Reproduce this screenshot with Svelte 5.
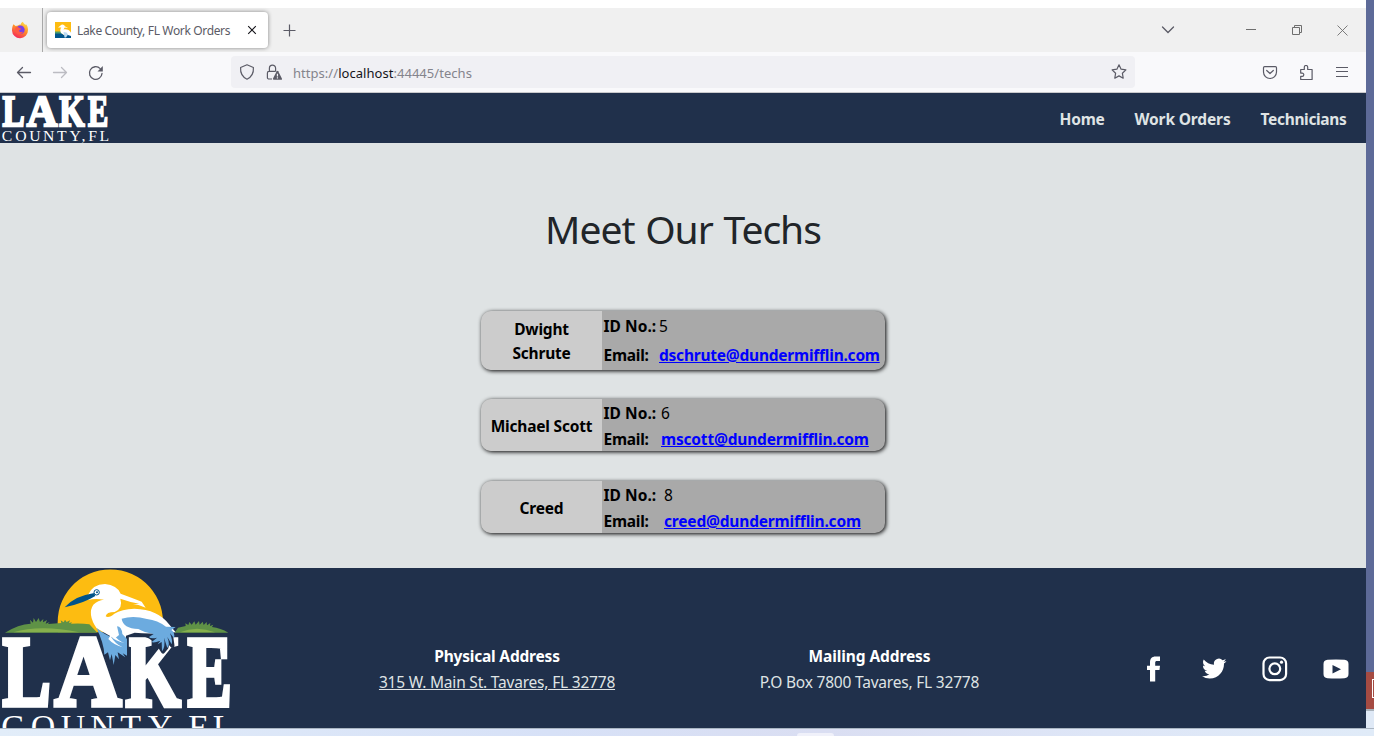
<script>
  const links = [
    { text: 'Home', ls: -0.25 },
    { text: 'Work Orders', ls: -0.14 },
    { text: 'Technicians', ls: -0.34 }
  ];
  const techs = [
    { name: 'Dwight Schrute', id: 5, email: 'dschrute@dundermifflin.com', h: 59, label: 57, row: 29, ls: -0.23 },
    { name: 'Michael Scott', id: 6, email: 'mscott@dundermifflin.com', h: 52, label: 59, row: 26, ls: -0.18 },
    { name: 'Creed', id: 8, email: 'creed@dundermifflin.com', h: 52, label: 62, row: 26, ls: -0.18 }
  ];
  const letters = [
    { ch: 'L', x: 8, k: 0.72 },
    { ch: 'A', x: 165, k: 0.92 },
    { ch: 'K', x: 377, k: 0.71 },
    { ch: 'E', x: 563, k: 0.66 }
  ];
</script>

{#snippet lettering()}
  <g fill="#fff">
    {#each letters as l}
      <text transform="translate({l.x} 434) scale({l.k} 1)" font-family="Liberation Serif, serif" font-weight="700" font-size="298" stroke="#fff" stroke-width="16">{l.ch}</text>
    {/each}
    <text x="4 92 182 271 361 443 520 565 638" y="534" font-family="Liberation Serif, serif" font-size="102">COUNTY,FL</text>
  </g>
{/snippet}

<div class="desktop">
  <div class="browser">
    <div class="titlebar">
      <div class="pinned">
        <svg width="18" height="18" viewBox="0 0 18 18">
          <defs>
            <linearGradient id="fox" x1=".8" y1="0" x2=".3" y2="1"><stop offset="0" stop-color="#ffe14a" /><stop offset=".45" stop-color="#ff9328" /><stop offset="1" stop-color="#f5245c" /></linearGradient>
          </defs>
          <path d="M2.5 3.2 4.6 5 7 4.6C8 3.5 9 3.4 10 3.6 9.7 2.5 10.5 1.3 12 .7c.2 1.5 1.5 2.2 2.5 3.5l.3-1.1C16.4 4.8 17 7 17 9A8 8 0 0 1 1 9.4c0-2.500.5-4.500 1.500-6.200Z" fill="url(#fox)" />
          <circle cx="9.400" cy="8.800" r="4.300" fill="#7a3fe8" />
          <path d="M4.500 6.500c1.600-.8 3-.3 4.200.7l1.600.5c-.4 1-1.700 1.200-2.400 1.800.4 2 2.800 1.900 4.100 1-.8 3-5 3.600-6.800 1C4 10 4 8 4.500 6.500Z" fill="#ff5a48" />
        </svg>
      </div>
      <div class="tab">
        <svg width="16" height="16" viewBox="0 0 16 16">
          <rect width="16" height="16" fill="#fdbc11" />
          <path d="M0 11 5 10l4 3 7-3v6H0Z" fill="#00558c" />
          <path d="M0 9.500h6l2 2H0Z" fill="#4e9b69" />
          <path d="M3 5.500 5.500 3.500c1.300-1.800 4-1 4.300.8L13 6 9.700 5.500 8.500 7.500c3-.8 6 .5 7.500 3V14l-3-1-2-1-2 1-3-2C5 9 5 7.300 6.300 5.500Z" fill="#fff" />
          <path d="m8.500 10 3 .5 1.500 2-2 3H9.500Z" fill="#bddcf2" />
        </svg>
        <span>Lake County, FL Work Orders</span>
        <svg class="x" width="10" height="10" viewBox="0 0 10 10"><path d="m1.200 1.200 7.600 7.600m0-7.600L1.200 8.800" stroke="#15141a" stroke-width="1.100" /></svg>
      </div>
      <svg class="plus" width="13" height="13" viewBox="0 0 13 13"><path d="M6.500.5v12M.5 6.500h12" stroke="#5b5b66" stroke-width="1.200" /></svg>
      <div class="window">
        <svg width="14" height="14" viewBox="0 0 14 14"><path d="m1.500 4 5.500 5.500L12.500 4" fill="none" stroke="#5b5b66" stroke-width="1.300" stroke-linecap="round" /></svg>
        <svg class="min" width="10" height="10" viewBox="0 0 10 10"><path d="M0 4.500h10" stroke="#6e6e6e" /></svg>
        <svg width="10" height="10" viewBox="0 0 10 10"><path d="M.5 2.500h7v7h-7zM2.500 2.500v-2h7v7h-2" fill="none" stroke="#6e6e6e" /></svg>
        <svg width="11" height="11" viewBox="0 0 11 11"><path d="m.5.5 10 10m0-10-10 10" stroke="#6e6e6e" stroke-width=".9" /></svg>
      </div>
    </div>

    <div class="toolbar">
      <div class="history">
        <svg width="16" height="16" viewBox="0 0 16 16"><path d="M14.500 7.500H1.500M6.500 2.500l-5 5 5 5" fill="none" stroke="#5b5b66" stroke-width="1.300" stroke-linecap="round" stroke-linejoin="round" /></svg>
        <svg width="16" height="16" viewBox="0 0 16 16"><path d="M1.500 7.500h13M9.500 2.500l5 5-5 5" fill="none" stroke="#bcbcc2" stroke-width="1.300" stroke-linecap="round" stroke-linejoin="round" /></svg>
        <svg width="16" height="16" viewBox="0 0 16 16"><path d="M14 8.500A6.300 6.300 0 1 1 12.200 3.600" fill="none" stroke="#5b5b66" stroke-width="1.300" stroke-linecap="round" /><path d="M14.800 1v5.400H9.500Z" fill="#5b5b66" /></svg>
      </div>
      <div class="url">
        <svg width="16" height="16" viewBox="0 0 16 16"><path d="m8 .8 6.400 2.700c.3 4.300-1.400 9.300-6.400 11.700C3 12.800 1.300 7.800 1.600 3.500Z" fill="none" stroke="#5b5b66" stroke-width="1.200" stroke-linejoin="round" /></svg>
        <svg class="lock" width="16" height="16" viewBox="0 0 16 16">
          <path d="M6 15H3.200C2 15 1.400 14.400 1.400 13.400V9c0-1 .6-1.600 1.600-1.600h6.500M3.400 7V4.200a3.100 3.100 0 0 1 6.200 0V7.500" fill="none" stroke="#5b5b66" stroke-width="1.200" />
          <path d="M10.700 7.300c.5-.8 1-.8 1.500 0l3.700 7.200c.3.700 0 1.300-.8 1.300H7.800c-.8 0-1.100-.6-.8-1.300Z" fill="#5b5b66" /><path d="M11.450 9.800v2.600m0 .9v1.200" stroke="#f0f0f4" stroke-width="1.200" />
        </svg>
        <span>https://<b>localhost</b>:44445/techs</span>
        <svg class="star" width="16" height="16" viewBox="0 0 16 16"><path d="m8 .8 2.100 4.400 4.800.7-3.500 3.400.8 4.900L8 11.900l-4.200 2.300.8-4.900L1.100 5.900l4.800-.7Z" fill="none" stroke="#5b5b66" stroke-width="1.200" stroke-linejoin="round" /></svg>
      </div>
      <div class="tools">
        <svg width="16" height="16" viewBox="0 0 16 16"><path d="M2.600 1.700h10.800c.7 0 1.100.4 1.100 1.100V7a6.500 6.500 0 0 1-13 0V2.800c0-.7.4-1.100 1.100-1.100ZM4.700 5.500 8 8.500l3.300-3" fill="none" stroke="#5b5b66" stroke-width="1.200" stroke-linecap="round" stroke-linejoin="round" /></svg>
        <svg width="16" height="16" viewBox="0 0 16 16"><path d="M2.700 4.500h3.600V2.200a1.700 1.700 0 0 1 3.400 0V4.500h4.400v10H2.700v-3.200h1.500a1.600 1.600 0 0 0 0-3.200H2.700Z" fill="none" stroke="#5b5b66" stroke-width="1.200" stroke-linejoin="round" /></svg>
        <svg width="16" height="16" viewBox="0 0 16 16"><path d="M2 2.500h12M2 6.500h12M2 11.500h12" stroke="#5b5b66" stroke-width="1.100" /></svg>
      </div>
    </div>

    <header>
      <svg width="110" height="50" viewBox="0 279 330 150"><g transform="translate(3.500 179.500) scale(.463 .455)">{@render lettering()}</g></svg>
      <nav>{#each links as l}<a href="#top" style="letter-spacing:{l.ls}px">{l.text}</a>{/each}</nav>
    </header>

    <main>
      <h1>Meet Our Techs</h1>
      <div class="cards">
        {#each techs as t}
          <article style="height:{t.h}px">
            <div class="name">{t.name}</div>
            <dl style="grid-template-columns:{t.label - 1.5}px auto;line-height:{t.row}px">
              <dt>ID No.:</dt><dd>{t.id}</dd>
              <dt class="em">Email:</dt><dd><a href="mailto:{t.email}" style="letter-spacing:{t.ls}px">{t.email}</a></dd>
            </dl>
          </article>
        {/each}
      </div>
    </main>

    <footer>
      <svg width="250" height="160" viewBox="0 24 750 480">
        <path d="M174 204A158 158 0 1 1 488 204V217H174Z" fill="#fdbc11" />
        <path d="M15 218Q55 193 92 191l-2-12 9 9 2-14 7 12 8-12 4 12 10-9-1 10 12-7-4 11 12-5-5 6 40-3-2-8 9 6 4-8 5 7 10-5-3 8 9-2-3 4Q245 189 268 193L292 218Z" fill="#5f9246" />
        <path d="M40 217Q120 193 238 217Z" fill="#86b04d" />
        <path d="M524 218 534 203 557 198l-1-8 9 5 3-9 7 8 8-10 4 10 10-11 2 11 9-9 3 10 9-9 1 10 10-7-1 9 10-4-4 7Q662 204 685 218Z" fill="#5f9246" />
        <path d="M540 217Q590 196 645 217Z" fill="#86b04d" />
        {@render lettering()}
        <g transform="translate(165 24)">
          <g fill="#20304b" stroke="#20304b" stroke-width="13" stroke-linejoin="round">
            <path d="M180 200h35v58l-12-4-25 20-23-15Z" />
            <path d="M215 198h132l5 35-13-15-5 20-10 12Q300 206 270 200Z" />
          </g>
          <path d="M99 81Q112 49 150 48 186 51 197 77 235 91 260 101L272 119Q245 108 233 109L253 107Q220 101 196 92 205 120 179 132 154 132 152 145 162 151 178 137 200 123 238 122 310 124 344 171L362 193Q285 199 239 194L213 203 211 230 125 181Q96 138 115 110 129 97 147 95 120 90 100 96Z" fill="#fff" />
          <path d="M29 118Q60 83 118 75L121 84Q88 105 29 118Z" fill="#00538a" />
          <circle cx="125" cy="73" r="8" fill="#fff" stroke="#00538a" stroke-width="3" /><circle cx="126" cy="73" r="3" fill="#00538a" />
          <path d="M124 179Q149 201 180 211L192 201 186 175Q200 175 202 198L216 213V263L203 256 211 268 188 253 192 274 181 261 176 291 170 258 165 277 159 253 148 260Q147 226 124 179Z" fill="#6cabdf" />
          <path d="M171 194q18 25 38 31-26-4-42-20 14 24 36 33-28-8-43-25" fill="#fff" />
          <path d="M200 152Q235 142 276 153 308 157 333 176L362 177 349 186Q361 194 357 211L345 195Q354 220 350 229L337 207Q346 231 337 240L327 209Q332 235 321 250L320 222 308 229 316 218Q296 226 290 222L306 209Q287 213 282 207L296 198Q267 193 250 183 204 181 200 152Z" fill="#6cabdf" />
        </g>
      </svg>
      <div class="addr"><b>Physical Address</b><a href="#map">315 W. Main St. Tavares, FL 32778</a></div>
      <div class="addr"><b class="mail">Mailing Address</b><span>P.O Box 7800 Tavares, FL 32778</span></div>
      <div class="social">
        <svg width="26" height="26" viewBox="0 0 26 26"><path d="M10 25.500V14H7V9.700H10V6.500C10 2.500 12 .5 15.500.5H20V5H17C15.600 5 15.200 5.500 15.200 6.700v3H20L19.500 14H15.200V25.500Z" fill="#fff" /></svg>
        <svg width="26" height="26" viewBox="-1 -.3 25.500 25.500"><path d="M23.950 4.570a10 10 0 0 1-2.820.77 4.960 4.960 0 0 0 2.160-2.720c-.95.560-2 .970-3.130 1.190a4.920 4.920 0 0 0-8.380 4.480C7.690 8.100 4.070 6.130 1.640 3.160a4.920 4.920 0 0 0 1.520 6.570 4.900 4.900 0 0 1-2.230-.62v.06a4.920 4.920 0 0 0 3.950 4.830 5 5 0 0 1-2.210.08 4.940 4.940 0 0 0 4.600 3.420A9.870 9.870 0 0 1 0 19.540a14 14 0 0 0 7.550 2.210c9.050 0 14-7.500 14-13.980 0-.21 0-.42-.02-.63a9.940 9.940 0 0 0 2.420-2.570Z" fill="#fff" /></svg>
        <svg width="26" height="26" viewBox="0 0 26 26"><rect x="1.500" y="1.500" width="22.600" height="22.600" rx="6" fill="none" stroke="#fff" stroke-width="2.200" /><circle cx="12.800" cy="12.800" r="5.400" fill="none" stroke="#fff" stroke-width="2.200" /><circle cx="19.500" cy="6.200" r="1.600" fill="#fff" /></svg>
        <svg width="26" height="26" viewBox="0 0 26 26"><path d="M4.500 3.800Q13 3 21.500 3.800 25.500 4.200 25.500 8v10q0 3.800-4 4.200-8.500.8-17 0-4-.4-4-4.200V8Q.5 4.200 4.500 3.800ZM9.500 9v8.500l8.500-4.200Z" fill="#fff" /></svg>
      </div>
    </footer>
  </div>
  <aside><div class="red"><i></i></div></aside>
  <div class="taskbar"><i></i></div>
</div>

<style>
  :global(body) { margin: 0; overflow: hidden; }
  svg { display: block; flex: none; }
  .desktop { width: 1374px; height: 736px; display: grid; grid-template: 728px 8px / 1366px 8px; background: #dfe9f6; font: 15.5px "Noto Sans", sans-serif; letter-spacing: -.2px; overflow: hidden; }
  .browser { display: grid; grid-template-rows: 44px 41px 50px 425px 160px; padding-top: 8px; background: #fff; }
  .titlebar { display: flex; align-items: center; background: #f0f0f0; }
  .pinned { width: 42px; height: 44px; border-right: 1px solid #a9a9a9; display: grid; place-items: center; padding-right: 0; }
  .pinned svg { margin-right: 3px; }
  .tab { margin-left: 4px; width: 221px; height: 36px; box-sizing: border-box; padding: 0 11px 0 8px; background: #fff; border-radius: 4px; box-shadow: 0 0 4px rgba(0, 0, 0, .45); display: flex; align-items: center; gap: 6px; font-size: 12px; letter-spacing: -.35px; color: #5b5b66; white-space: nowrap; }
  .x { margin-left: auto; }
  .plus { margin-left: 15px; margin-top: 1px; }
  .window { margin-left: auto; display: flex; align-items: center; padding-right: 18px; }
  .window .min { margin-left: 71px; margin-right: 36px; }
  .window svg:last-child { margin-left: 35px; }
  .toolbar { display: flex; align-items: center; background: #f9f9fb; border-bottom: 1px solid #c9c9cc; }
  .history { display: flex; gap: 20px; padding-left: 16px; width: 215px; margin-top: 1px; }
  .url { width: 904px; height: 32px; box-sizing: border-box; padding: 0 8px; background: #f0f0f4; border-radius: 4px; display: flex; align-items: center; font-size: 13px; letter-spacing: .04px; color: #84848c; }
  .url span { padding-top: 1px; }
  .lock { margin: 0 11px; }
  .url b { font-weight: 400; color: #15141a; }
  .star { margin-left: auto; }
  .tools { display: flex; gap: 20px; margin: 1px 16px 0 auto; }
  header { background: #20304b; display: flex; justify-content: space-between; }
  nav { display: flex; gap: 30px; padding: 1px 19.500px 0 0; align-items: center; }
  nav a { color: #dfe3e4; text-decoration: none; font-weight: 700; }
  main { background: #dfe3e4; display: flex; flex-direction: column; align-items: center; }
  h1 { margin: 56px 0 0; font-size: 39px; line-height: 60px; font-weight: 400; letter-spacing: -1px; word-spacing: 1.500px; color: #212529; }
  .cards { margin-top: 51.500px; display: grid; gap: 29.600px; width: 404px; color: #000; }
  article { display: grid; grid-template-columns: 121px 1fr; border-radius: 10px; overflow: hidden; background: #a9a9a9; box-shadow: 1px 1px 4px #000; }
  .name { background: #ccc; font-weight: 700; line-height: 24px; text-align: center; padding: 1px 8px 0; display: grid; place-items: center; }
  dl { margin: 0; padding: 1px 0 0 1.500px; display: grid; align-content: center; white-space: nowrap; }
  dt { font-weight: 700; letter-spacing: .05px; }
  .em { letter-spacing: -.25px; }
  dd { margin: 0; }
  dd a { color: #00f; font-weight: 700; }
  footer { background: #20304b; display: grid; grid-template-columns: 311px 372px 373px 1fr; overflow: hidden; }
  .addr { display: flex; flex-direction: column; align-items: center; padding-top: 75px; line-height: 26px; color: #dfe3e4; }
  .addr a { color: inherit; }
  .addr b { color: #fff; }
  .mail { letter-spacing: -.1px; }
  .social { display: flex; gap: 34.700px; padding: 88px 17.500px 0 0; justify-content: flex-end; }
  aside { background: linear-gradient(#5d6a98 709px, #dfe9f6 709px); padding-top: 672px; }
  .red { height: 39px; background: #a54b42; border-bottom: 2px solid #a8b2bb; padding-top: 7px; box-sizing: border-box; }
  .red i { display: block; width: 2px; height: 19px; margin-left: 6px; border: 1px solid #fff; border-right: 0; box-sizing: border-box; }
  .taskbar { grid-column: 1 / -1; border-top: 1px solid #a9b5c2; background: linear-gradient(90deg, #e2edf9, #d7e1f7 40%, #dadef2 60%, #dee6f7 80%, #e0ebf8); padding-top: 4px; box-sizing: border-box; }
  .taskbar i { display: block; width: 37px; height: 3px; margin-left: 797px; background: #f0f1fa; border-radius: 3px 3px 0 0; }
</style>
